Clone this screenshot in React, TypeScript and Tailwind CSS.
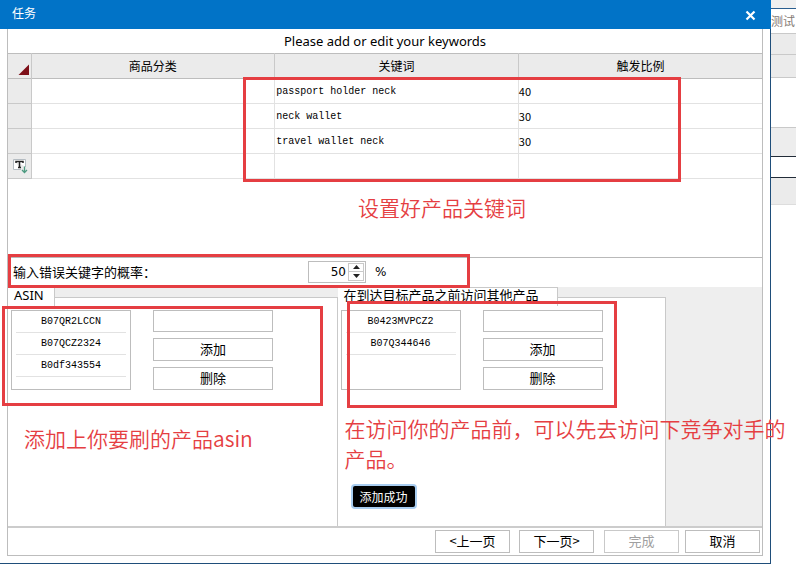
import React, { useState } from "react";

const keywords = [
  { category: "", keyword: "passport holder neck", ratio: "40" },
  { category: "", keyword: "neck wallet", ratio: "30" },
  { category: "", keyword: "travel wallet neck", ratio: "30" },
];

const FrameMark = ({ className }: { className: string }) => (
  <div
    className={`pointer-events-none absolute z-10 border-3 border-[#e53e42] ${className}`}
  />
);

const Note = ({
  className,
  children,
}: {
  className: string;
  children: React.ReactNode;
}) => (
  <p
    className={`pointer-events-none absolute z-10 text-[21px] leading-[30px] text-[#e53e42] font-[350] whitespace-nowrap ${className}`}
  >
    {children}
  </p>
);

const KeywordTable = () => (
  <div className="relative border-b border-[#b9b9b9] pb-[78px]">
    <table className="w-full table-fixed border-collapse text-xs">
      <thead>
        <tr className="h-[25px] border-y border-[#bdbdbd] bg-[#ebebeb]">
          <th className="w-[23px] border-r border-[#c9c9c9] p-0">
            <svg
              width="12"
              height="12"
              viewBox="0 0 12 12"
              className="mt-2 ml-2.5"
              aria-hidden="true"
            >
              <path d="M11 0.5V11H0.5Z" fill="#7d0f18" />
            </svg>
          </th>
          <th className="border-r border-[#c9c9c9] p-0 font-normal">商品分类</th>
          <th className="border-r border-[#c9c9c9] p-0 font-normal">关键词</th>
          <th className="p-0 font-normal">触发比例</th>
        </tr>
      </thead>
      <tbody>
        {keywords.map((row) => (
          <tr key={row.keyword} className="h-[25px] border-b border-[#e2e2e2]">
            <td className="border-r border-b border-[#c9c9c9] bg-[#ebebeb] p-0" />
            <td className="border-r border-[#e2e2e2] p-0">{row.category}</td>
            <td className="border-r border-[#e2e2e2] pt-0.5 pr-0 pb-0 pl-px font-['Liberation_Mono',monospace] text-[10px]">
              {row.keyword}
            </td>
            <td className="p-0 text-[11px] leading-4">{row.ratio}</td>
          </tr>
        ))}
        <tr className="h-[25px] border-b border-[#e2e2e2]">
          <td className="border-r border-b border-[#c9c9c9] bg-[#ebebeb] p-0">
            <svg
              width="16"
              height="16"
              viewBox="0 0 16 16"
              className="ml-1"
              aria-hidden="true"
            >
              <path d="M1.5 1.5H13.5V9M9 11.5H1.5V1.5" fill="#fff" stroke="#b5bcc2" />
              <path
                d="M4 5V3.5H11V5M7.5 3.5V9.5M6 9.5H9"
                fill="none"
                stroke="#222"
                strokeWidth="1.5"
              />
              <path
                d="M12.5 8.5V14M10 12L12.5 14.5L15 12"
                fill="none"
                stroke="#4d9a80"
                strokeWidth="1.3"
              />
            </svg>
          </td>
          <td className="border-r border-[#e2e2e2] p-0" />
          <td className="border-r border-[#e2e2e2] p-0" />
          <td className="p-0" />
        </tr>
      </tbody>
    </table>
    <FrameMark className="top-6 left-[235px] h-[105px] w-[438px]" />
    <Note className="top-[139px] left-[350px]">设置好产品关键词</Note>
  </div>
);

const ErrorRate = () => {
  const [rate, setRate] = useState(50);

  return (
    <div className="relative flex h-[29px] items-center pb-0.5 pl-[5px] text-[13px]">
      <label htmlFor="error-rate" className="w-[295px]">
        输入错误关键字的概率：
      </label>
      <div className="flex h-[22px] w-[58px] items-center border border-[#bdbdbd] pr-px">
        <input
          id="error-rate"
          className="w-0 flex-1 bg-transparent pr-0.5 text-right font-['DejaVu_Sans',sans-serif] text-xs outline-none"
          value={rate}
          onChange={(e) => setRate(Number(e.target.value) || 0)}
        />
        <div className="flex w-4 flex-col border border-[#c9c9c9]">
          <button
            type="button"
            aria-label="+"
            className="flex h-2 items-center justify-center border-b border-[#c9c9c9]"
            onClick={() => setRate(rate + 1)}
          >
            <svg width="7" height="4" viewBox="0 0 7 4">
              <path d="M0 4L3.5 0L7 4Z" fill="#222" />
            </svg>
          </button>
          <button
            type="button"
            aria-label="-"
            className="flex h-2 items-center justify-center"
            onClick={() => setRate(rate - 1)}
          >
            <svg width="7" height="4" viewBox="0 0 7 4">
              <path d="M0 0L3.5 4L7 0Z" fill="#222" />
            </svg>
          </button>
        </div>
      </div>
      <span className="ml-[9px] font-['DejaVu_Sans',sans-serif] text-xs">%</span>
      <FrameMark className="top-[-4px] left-0 h-[34px] w-[462px]" />
    </div>
  );
};

const ProductGroup = ({
  title,
  titleClass,
  items,
  children,
}: {
  title: string;
  titleClass: string;
  items: string[];
  children: React.ReactNode;
}) => {
  const [value, setValue] = useState("");

  return (
    <section className="relative flex flex-col pt-2.5">
      <h2
        className={`absolute top-0 left-0 z-[1] h-[19px] border-t border-r border-[#c9c9c9] bg-white pl-1.5 text-[13px] leading-[14px] font-['Noto_Sans','Noto_Sans_CJK_SC',sans-serif] whitespace-nowrap ${titleClass}`}
      >
        {title}
      </h2>
      <div className="flex flex-1 items-start gap-[22px] border-t border-r border-[#c9c9c9] bg-white pt-3 pb-[136px] pl-[3px]">
        <ul className="h-20 w-30 border border-[#bdbdbd] px-1 text-center font-['Liberation_Mono',monospace] text-[10px] leading-[21px]">
          {items.map((item) => (
            <li key={item} className="border-b border-[#e2e2e2]">
              {item}
            </li>
          ))}
        </ul>
        <div className="flex w-30 flex-col gap-1.5 text-[13px] leading-4">
          <input
            aria-label={title}
            className="h-[22px] border border-[#bdbdbd] px-1 outline-none"
            value={value}
            onChange={(e) => setValue(e.target.value)}
          />
          <button type="button" className="h-[23px] border border-[#bdbdbd] pb-0.5">
            添加
          </button>
          <button type="button" className="h-[23px] border border-[#bdbdbd] pb-0.5">
            删除
          </button>
        </div>
      </div>
      {children}
    </section>
  );
};

const Footer = () => (
  <div className="flex justify-end border-t-2 border-[#cccccc] pt-0.5 pr-0.5 pb-0.5 text-[13px] leading-4">
    <button
      type="button"
      className="mr-[9px] h-[23px] w-[75px] border border-[#bdbdbd] pb-px"
    >
      &lt;上一页
    </button>
    <button
      type="button"
      className="mr-2.5 h-[23px] w-[75px] border border-[#bdbdbd] pb-px"
    >
      下一页&gt;
    </button>
    <button
      type="button"
      disabled
      className="mr-1.5 h-[23px] w-[75px] border border-[#c9c9c9] pb-px text-[#a0a0a0]"
    >
      完成
    </button>
    <button type="button" className="h-[23px] w-[75px] border border-[#bdbdbd] pb-px">
      取消
    </button>
  </div>
);

// Slice of the main window that shows beside the dialog
const Backdrop = () => (
  <div className="w-[25px] shrink-0">
    <div className="h-2 bg-[#f0f0f0]" />
    <div className="flex h-[25px] items-center border-t border-[#2b5f90] text-xs whitespace-nowrap text-[#857a74]">
      测试
    </div>
    <div className="h-[21px] border-t border-[#c9c9c9] bg-[#ebebeb]" />
    <div className="h-6 border-y border-[#c9c9c9] bg-[#ebebeb]" />
    <div className="h-[49px]" />
    <div className="h-[29px] border-t border-[#c9c9c9] bg-[#ededed]" />
    <div className="h-[22px] border-y border-[#222c38]" />
    <div className="h-[27px] border-b border-[#dddddd] bg-[#ebebeb]" />
  </div>
);

export default function App() {
  return (
    <main className="flex min-h-screen items-start overflow-hidden bg-white font-['Noto_Sans_CJK_SC',sans-serif] text-black">
      <div className="relative z-[1] min-w-0 flex-1">
        <header className="flex h-[29px] items-center justify-between bg-[#0173c7] pr-[15px] pl-3 text-xs text-white">
          <h1 className="pb-1">任务</h1>
          <button type="button" aria-label="关闭" className="pt-0.5">
            <svg width="11" height="11" viewBox="0 0 11 11">
              <path d="M1.5 1.5L9.5 9.5M9.5 1.5L1.5 9.5" stroke="#fff" strokeWidth="2.2" />
            </svg>
          </button>
        </header>

        <div className="border-r border-b border-[#1f4e7a] pr-[7px] pb-[7px] pl-[7px]">
          <div className="border-x border-b border-[#bdbdbd]">
            <p className="text-center font-['Noto_Sans',sans-serif] text-[13px] leading-6">
              Please add or edit your keywords
            </p>
            <KeywordTable />
            <ErrorRate />
            <div className="grid grid-cols-[330fr_329fr_96fr] bg-[#eeeeee]">
              <ProductGroup
                title="ASIN"
                titleClass="pr-2.5"
                items={["B07QR2LCCN", "B07QCZ2324", "B0df343554"]}
              >
                <FrameMark className="top-[19px] left-[-6px] h-[100px] w-[321px]" />
                <Note className="top-[136px] left-4">添加上你要刷的产品asin</Note>
              </ProductGroup>
              <ProductGroup
                title="在到达目标产品之前访问其他产品"
                titleClass="pr-[18px]"
                items={["B0423MVPCZ2", "B07Q344646"]}
              >
                <FrameMark className="top-3.5 left-[9px] h-[107px] w-[270px]" />
                <Note className="top-[126px] left-[7px]">
                  在访问你的产品前，可以先去访问下竞争对手的
                  <br />
                  产品。
                </Note>
                <div
                  role="status"
                  className="absolute top-[199px] left-[15px] rounded-xs bg-black px-[7px] text-xs leading-[21px] text-white ring-2 ring-[#a9cdf0]"
                >
                  添加成功
                </div>
              </ProductGroup>
            </div>
            <Footer />
          </div>
        </div>
      </div>
      <Backdrop />
    </main>
  );
}
